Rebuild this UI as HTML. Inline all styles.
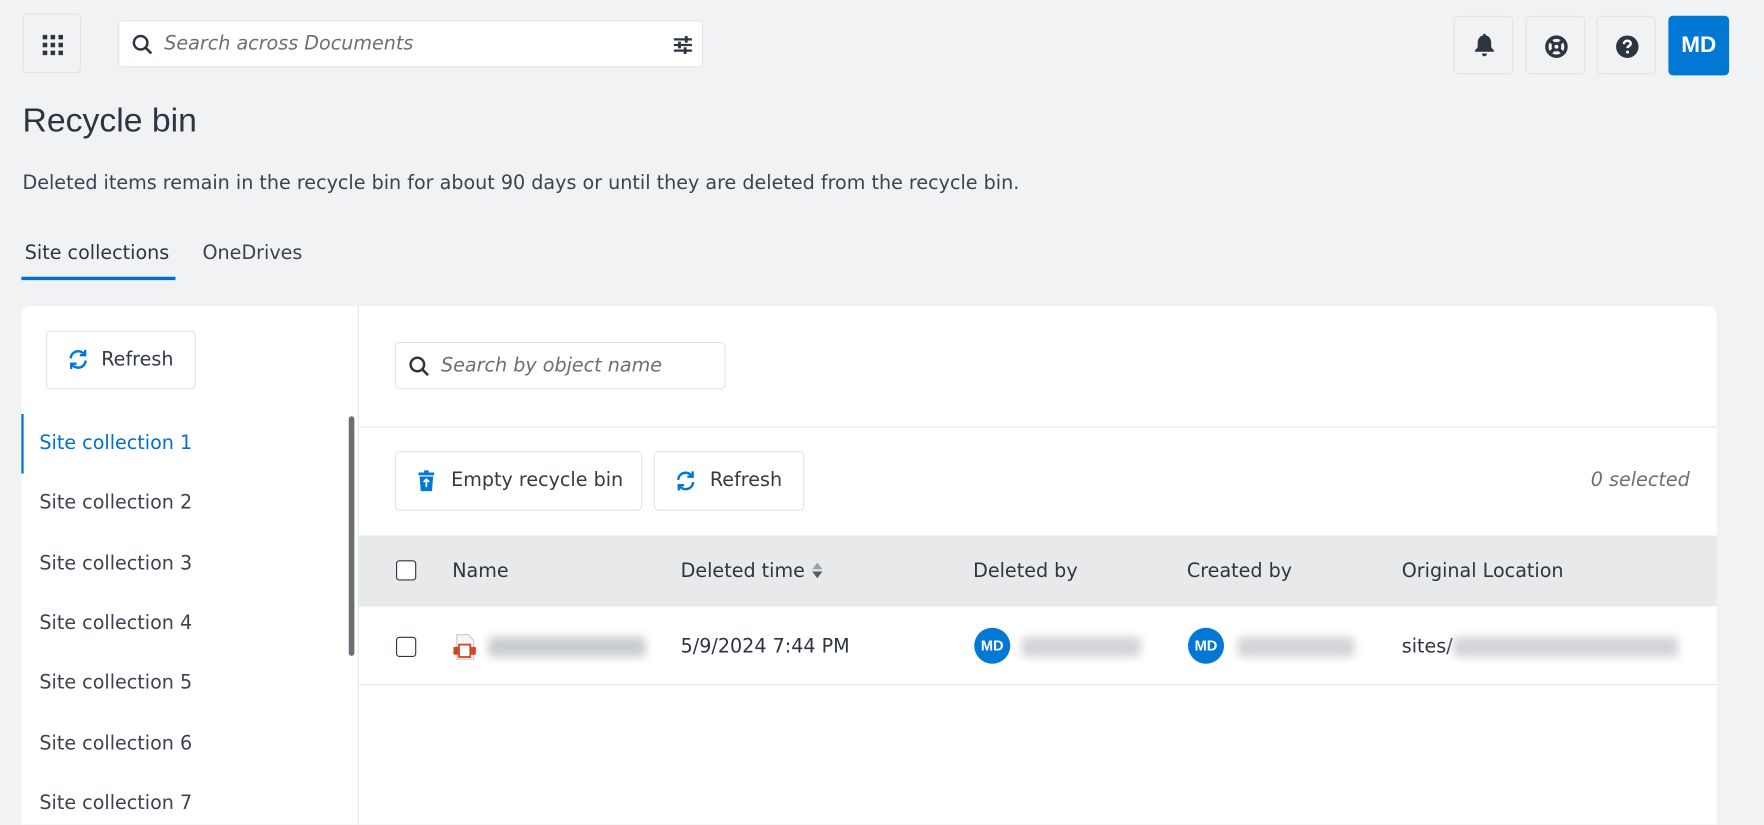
<!DOCTYPE html>
<html><head><meta charset="utf-8"><style>
*{box-sizing:border-box;margin:0;padding:0}
html,body{width:1764px;height:825px;overflow:hidden;background:#f1f2f4}
#w{position:absolute;left:0;top:0;width:1568px;height:733px;overflow:hidden;transform:scale(1.125);transform-origin:0 0;font-family:"DejaVu Sans",sans-serif;color:#323a45}
.a{position:absolute}
.btn{position:absolute;border:1px solid #e1e3e6;border-radius:4px;background:#f1f2f4}
.wb{position:absolute;border:1px solid #e1e3e6;border-radius:4px;background:#fff;display:flex;align-items:center;font-size:17px;color:#323a45}
.ph{font-style:italic;color:#6b6f76;font-size:17px}
.li{position:absolute;left:35px;font-size:17px;color:#3b4250}
.th{position:absolute;top:498px;font-size:17px;color:#2d3540}
.cb{position:absolute;width:18px;height:18px;border:1.5px solid #2d3540;border-radius:3px;background:#fff}
.av{position:absolute;width:32px;height:32px;border-radius:50%;background:#0078d4;color:#fff;font-size:13px;font-weight:bold;text-align:center;line-height:32px;font-family:"Liberation Sans",sans-serif}
.bl{position:absolute;height:18px;background:#c9ccd1;filter:blur(4px);border-radius:4px}
</style></head><body><div id="w">
<div class="btn" style="left:20px;top:12px;width:52px;height:53px">
<svg class="a" style="left:16px;top:17px" width="20" height="20" viewBox="0 0 20 20" fill="#2d3540"><rect x="1" y="1" width="4" height="4"/><rect x="8" y="1" width="4" height="4"/><rect x="15" y="1" width="4" height="4"/><rect x="1" y="8" width="4" height="4"/><rect x="8" y="8" width="4" height="4"/><rect x="15" y="8" width="4" height="4"/><rect x="1" y="15" width="4" height="4"/><rect x="8" y="15" width="4" height="4"/><rect x="15" y="15" width="4" height="4"/></svg></div>
<div class="wb" style="left:105px;top:18px;width:520px;height:42px">
<svg class="a" style="left:11px;top:11px" width="20" height="20" viewBox="0 0 20 20" fill="none" stroke="#2d3540" stroke-width="2.2"><circle cx="8" cy="8" r="6"/><path d="M12.5 12.5l5 5"/></svg>
<span class="ph a" style="left:40px;top:10px">Search across Documents</span>
<svg class="a" style="left:492px;top:12px" width="18" height="18" viewBox="0 0 18 18" stroke="#2d3540" stroke-width="2"><path d="M1 4h16M1 9h16M1 14h16"/><path d="M12 1v6M6 6v6M11 11v6" stroke-width="2.5"/></svg></div>
<div class="btn" style="left:1292px;top:14px;width:53px;height:52px"><svg class="a" style="left:17px;top:15px" width="19" height="21" viewBox="0 0 19 21" fill="#2d3540"><path d="M9.5 0c1 0 1.3.8 1.3 1.4C14 2 15.5 5 15.5 8v4l2.5 3v1H1v-1l2.5-3V8C3.5 5 5 2 8.2 1.4 8.2.8 8.5 0 9.5 0z"/><path d="M7.3 17.5h4.4c0 1.5-1 2.5-2.2 2.5s-2.2-1-2.2-2.5z"/></svg></div>
<div class="btn" style="left:1356px;top:14px;width:53px;height:52px"><svg class="a" style="left:16px;top:16px" width="21" height="21" viewBox="0 0 21 21" fill="none" stroke="#2d3540"><circle cx="10.5" cy="10.5" r="8.5" stroke-width="3"/><circle cx="10.5" cy="10.5" r="3" stroke-width="2.5"/><path d="M4.5 4.5l3.5 3.5M16.5 4.5L13 8M4.5 16.5L8 13M16.5 16.5L13 13" stroke-width="3"/></svg></div>
<div class="btn" style="left:1419px;top:14px;width:53px;height:52px"><svg class="a" style="left:16px;top:16px" width="21" height="21" viewBox="0 0 21 21"><circle cx="10.5" cy="10.5" r="10" fill="#2d3540"/><path d="M7.5 8.2c0-2 1.4-3 3-3s3 1 3 2.6c0 2-2.8 2-2.8 4" fill="none" stroke="#fff" stroke-width="2.2"/><circle cx="10.7" cy="15.3" r="1.3" fill="#fff"/></svg></div>
<div class="a" style="left:1483px;top:14px;width:54px;height:53px;background:#0078d4;border-radius:4px;color:#fff;font-weight:bold;font-size:20px;text-align:center;line-height:53px;font-family:'Liberation Sans',sans-serif">MD</div>
<div class="a" style="left:20px;top:91px;font-size:30px;color:#2d3540;font-family:'Liberation Sans',sans-serif">Recycle bin</div>
<div class="a" style="left:20px;top:153px;font-size:17px;color:#3b4250">Deleted items remain in the recycle bin for about 90 days or until they are deleted from the recycle bin.</div>
<div class="a" style="left:22px;top:215px;font-size:17px;color:#2d3540">Site collections</div>
<div class="a" style="left:19px;top:246px;width:137px;height:3px;background:#0070cf"></div>
<div class="a" style="left:180px;top:215px;font-size:17px;color:#3b4250">OneDrives</div>
<div class="a" style="left:19px;top:272px;width:1507px;height:461px;background:#fff;border-radius:8px 8px 0 0"></div>
<div class="a" style="left:318px;top:272px;width:1px;height:461px;background:#e6e7ea"></div>
<div class="wb" style="left:41px;top:294px;width:133px;height:52px;background:#fff">
<svg class="a" style="left:18px;top:15px" width="19" height="19" viewBox="0 0 20 20" fill="none" stroke="#0078d4" stroke-width="2.4"><path d="M3 9a7 7 0 0 1 12.5-4"/><path d="M16.5 1v5h-5" stroke-width="2.2"/><path d="M17 11a7 7 0 0 1-12.5 4"/><path d="M3.5 19v-5h5" stroke-width="2.2"/></svg>
<span class="a" style="left:48px;top:15px">Refresh</span></div>
<div class="a" style="left:19px;top:368px;width:2px;height:53px;background:#0078d4"></div>
<div class="li" style="top:384px;color:#0070cf">Site collection 1</div>
<div class="li" style="top:437px">Site collection 2</div>
<div class="li" style="top:491px">Site collection 3</div>
<div class="li" style="top:544px">Site collection 4</div>
<div class="li" style="top:597px">Site collection 5</div>
<div class="li" style="top:651px">Site collection 6</div>
<div class="li" style="top:704px">Site collection 7</div>
<div class="a" style="left:310px;top:370px;width:5px;height:213px;background:#6b6f76;border-radius:3px"></div>
<div class="wb" style="left:351px;top:304px;width:294px;height:42px">
<svg class="a" style="left:11px;top:11px" width="20" height="20" viewBox="0 0 20 20" fill="none" stroke="#2d3540" stroke-width="2.2"><circle cx="8" cy="8" r="6"/><path d="M12.5 12.5l5 5"/></svg>
<span class="ph a" style="left:40px;top:10px">Search by object name</span></div>
<div class="a" style="left:318px;top:379px;width:1208px;height:1px;background:#e6e7ea"></div>
<div class="wb" style="left:351px;top:401px;width:220px;height:53px">
<svg class="a" style="left:20px;top:16px" width="14" height="19" viewBox="0 0 14 19" fill="#0078d4"><rect x="0" y="2" width="14" height="2.5"/><rect x="5" y="0" width="4" height="2.5"/><path d="M1 5.5h12l-1 13H2z"/><path d="M7 8v7M4.5 10.5L7 8l2.5 2.5" stroke="#fff" stroke-width="1.5" fill="none"/></svg>
<span class="a" style="left:49px;top:15px">Empty recycle bin</span></div>
<div class="wb" style="left:581px;top:401px;width:134px;height:53px">
<svg class="a" style="left:18px;top:16px" width="19" height="19" viewBox="0 0 20 20" fill="none" stroke="#0078d4" stroke-width="2.4"><path d="M3 9a7 7 0 0 1 12.5-4"/><path d="M16.5 1v5h-5" stroke-width="2.2"/><path d="M17 11a7 7 0 0 1-12.5 4"/><path d="M3.5 19v-5h5" stroke-width="2.2"/></svg>
<span class="a" style="left:49px;top:15px">Refresh</span></div>
<div class="a ph" style="right:66px;top:417px">0 selected</div>
<div class="a" style="left:318px;top:476px;width:1208px;height:63px;background:#e8e9eb"></div>
<div class="cb" style="left:352px;top:498px"></div>
<div class="th" style="left:402px">Name</div>
<div class="th" style="left:605px">Deleted time <svg width="11" height="16" viewBox="0 0 11 16" style="vertical-align:-2px"><path d="M1 7L5.5 1 10 7z" fill="#9aa0a8"/><path d="M1 9l4.5 6L10 9z" fill="#555c66"/></svg></div>
<div class="th" style="left:865px">Deleted by</div>
<div class="th" style="left:1055px">Created by</div>
<div class="th" style="left:1246px">Original Location</div>
<div class="a" style="left:318px;top:608px;width:1208px;height:1px;background:#e6e7ea"></div>
<div class="cb" style="left:352px;top:566px"></div>
<svg class="a" style="left:402px;top:563px" width="22" height="24" viewBox="0 0 22 24"><path d="M4 1h10l5 5v17H4z" fill="#f6f6f6" stroke="#ccc"/><rect x="1" y="12" width="20" height="7" rx="1" fill="#d24726"/><rect x="6" y="10" width="10" height="11" fill="#fff" stroke="#d24726" stroke-width="1.6"/></svg>
<div class="bl" style="left:434px;top:566px;width:140px"></div>
<div class="a" style="left:605px;top:565px;font-size:17px;color:#2d3540">5/9/2024 7:44 PM</div>
<div class="av" style="left:866px;top:558px">MD</div>
<div class="bl" style="left:908px;top:566px;width:106px;background:#d2d4d8"></div>
<div class="av" style="left:1056px;top:558px">MD</div>
<div class="bl" style="left:1100px;top:566px;width:104px;background:#d2d4d8"></div>
<div class="a" style="left:1246px;top:565px;font-size:17px;color:#2d3540">sites/</div>
<div class="bl" style="left:1292px;top:566px;width:200px;background:#d2d4d8"></div>
</div></body></html>
